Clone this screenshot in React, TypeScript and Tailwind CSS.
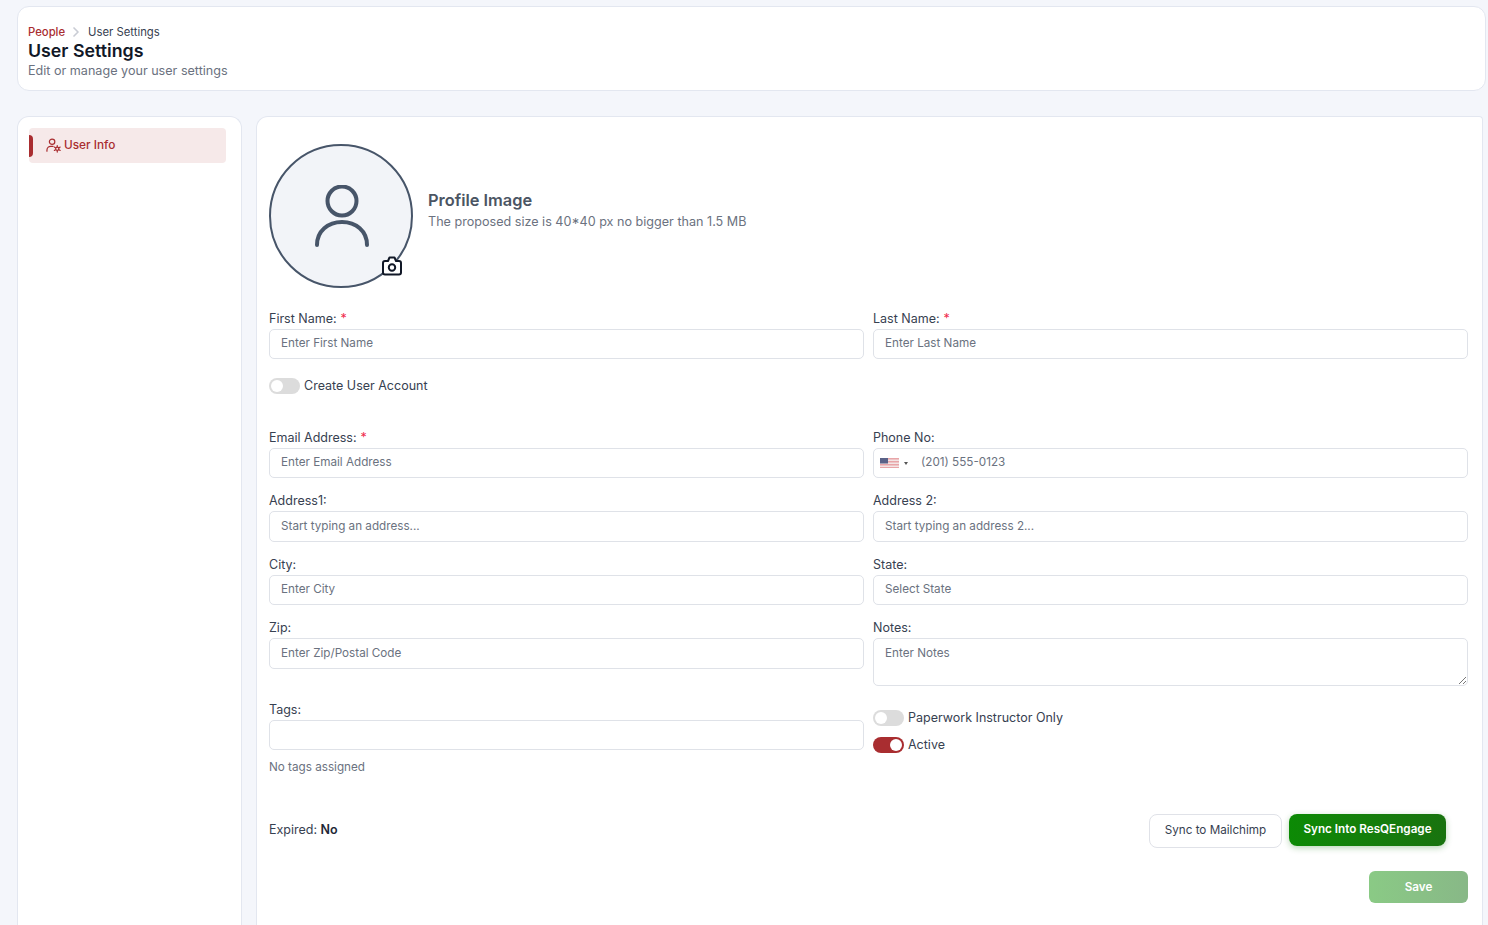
import { ChevronRight } from "lucide-react";

function Label({ text, required }: { text: string; required?: boolean }) {
  return (
    <label className="block h-[19px] text-[12.5px] leading-[19px] text-[#374151]">
      {text}
      {required && <span className="ml-1 text-[#ef2b4b]">*</span>}
    </label>
  );
}

function Field({ label, placeholder, required, tall }: { label: string; placeholder?: string; required?: boolean; tall?: "31" | "48" }) {
  const box = tall === "31" ? "h-[31px] leading-[28px]" : tall === "48" ? "h-[48px] leading-[28px]" : "h-[30px] leading-[26px]";
  return (
    <div>
      <Label text={label} required={required} />
      <div className={`${box} mt-[1px] rounded-[5px] border border-[#dfe2e8] bg-white px-[11px] text-[11.7px] text-[#6b7280]`}>
        {placeholder}
      </div>
    </div>
  );
}

function Toggle({ on, label }: { on?: boolean; label: string }) {
  return (
    <div className="flex items-center gap-1">
      <span className={`flex h-4 w-[31px] items-center rounded-full px-[2px] ${on ? "justify-end bg-[#a92d30]" : "bg-[#dcdcdc]"}`}>
        <span className="h-3 w-3 rounded-full bg-white" />
      </span>
      <span className="-mt-[2px] text-[12.5px] leading-[15px] text-[#374151]">{label}</span>
    </div>
  );
}

export default function App() {
  return (
    <div className="flex h-[925px] flex-col overflow-hidden bg-[#f4f6fb] pl-[17px] pr-[2px] pt-[6px] font-['Inter',sans-serif]">
      <header className="h-[85px] shrink-0 rounded-xl border border-[#e3e7f0] bg-white pl-[10px] pt-[17px]">
        <div className="flex h-4 items-center text-[11.3px] leading-4">
          <span className="font-medium text-[#a92d30]">People</span>
          <ChevronRight className="ml-[3px] mr-[4px] h-4 w-4 text-[#c9ccd4]" strokeWidth={2.5} />
          <span className="text-[#374151]">User Settings</span>
        </div>
        <h1 className="-mt-[1px] mb-[1px] text-[17.8px] font-semibold leading-[23px] text-[#111827]">User Settings</h1>
        <p className="text-[12.6px] leading-[16px] text-[#6b7280]">Edit or manage your user settings</p>
      </header>

      <div className="mt-[25px] flex min-h-0 flex-1 gap-[14px]">
        <aside className="w-[225px] shrink-0 rounded-t-xl border border-b-0 border-[#e3e7f0] bg-white px-[11px] pt-[11px]">
          <div className="flex h-[35px] w-[197px] items-center rounded-[4px] bg-[#f6e9e9]">
            <span className="h-[22px] w-1 rounded-r-sm bg-[#a92d30]" />
            <svg viewBox="0 0 16 16" className="ml-[13px] h-[15px] w-[15px]" fill="none" stroke="#a92d30" strokeWidth="1.3" strokeLinecap="round">
              <circle cx="6.5" cy="4" r="2.9" />
              <path d="M1 14 V13 A4 4 0 0 1 5 9 H7.5" />
              <circle cx="12" cy="11.5" r="1.7" />
              <path d="M12 8 V9.2 M12 13.8 V15 M8.9 9.7 L10 10.4 M14 12.6 L15.1 13.3 M8.9 13.3 L10 12.6 M14 10.4 L15.1 9.7" />
            </svg>
            <span className="ml-[3px] text-[11.8px] font-medium leading-[15px] text-[#a92d30]">User Info</span>
          </div>
        </aside>

        <main className="w-[1227px] rounded-tl-xl rounded-tr-sm border border-b-0 border-[#e3e7f0] bg-white pl-3 pr-[14px] pt-[27px]">
          <div className="flex items-center gap-[15px]">
            <div className="relative flex h-[144px] w-[144px] items-center justify-center rounded-full border-2 border-[#475569] bg-[#f2f4f8]">
              <svg viewBox="0 0 54 62" className="ml-[1px] h-[62px] w-[54px]" fill="none" stroke="#475569" strokeWidth="4" strokeLinecap="round">
                <circle cx="27" cy="16" r="14.5" />
                <path d="M2 60 C2 46 13 37 27 37 C41 37 52 46 52 60" />
              </svg>
              <svg viewBox="0 0 20 20" className="absolute bottom-[10px] right-[9px] h-5 w-5" fill="white" stroke="#111827" strokeWidth="2" strokeLinejoin="round">
                <path d="M3 5 H6 L7.5 1.5 H12.5 L14 5 H17 A2 2 0 0 1 19 7 V16.5 A2 2 0 0 1 17 18.5 H3 A2 2 0 0 1 1 16.5 V7 A2 2 0 0 1 3 5 Z" />
                <circle cx="10" cy="11.5" r="3.2" />
              </svg>
            </div>
            <div className="-mt-[13px]">
              <h2 className="-mt-[1px] mb-[1px] text-[16.4px] font-semibold leading-[24px] text-[#4b5563]">Profile Image</h2>
              <p className="text-[12.6px] leading-[18px] text-[#6b7280]">The proposed size is 40*40 px no bigger than 1.5 MB</p>
            </div>
          </div>

          <div className="mt-[21px] grid grid-cols-2 gap-x-[9px]">
            <Field label="First Name:" placeholder="Enter First Name" required />
            <Field label="Last Name:" placeholder="Enter Last Name" required />
          </div>

          <div className="mt-[19px]">
            <Toggle label="Create User Account" />
          </div>

          <div className="mt-[34px] grid grid-cols-2 gap-x-[9px] gap-y-[13px]">
            <Field label="Email Address:" placeholder="Enter Email Address" required />
            <div>
              <Label text="Phone No:" />
              <div className="mt-[1px] flex h-[30px] items-center rounded-[5px] border border-[#dfe2e8] bg-white pl-[6px] text-[11.7px] leading-[26px] text-[#6b7280]">
                <svg viewBox="0 0 19 10" className="h-[10px] w-[19px]">
                  <rect width="19" height="10" fill="#e8a5a8" />
                  <rect y="1.5" width="19" height="1.5" fill="#f3e4e4" />
                  <rect y="4.5" width="19" height="1.5" fill="#f3e4e4" />
                  <rect y="7.5" width="19" height="1.5" fill="#f3e4e4" />
                  <rect width="8" height="5.5" fill="#5a6288" />
                </svg>
                <span className="ml-[5px] h-0 w-0 border-x-[2px] border-t-[3px] border-x-transparent border-t-[#555]" />
                <span className="-mt-[2px] ml-[13px]">(201) 555-0123</span>
              </div>
            </div>
            <Field label="Address1:" placeholder="Start typing an address..." tall="31" />
            <Field label="Address 2:" placeholder="Start typing an address 2..." tall="31" />
            <Field label="City:" placeholder="Enter City" />
            <Field label="State:" placeholder="Select State" />
            <Field label="Zip:" placeholder="Enter Zip/Postal Code" tall="31" />
            <div className="relative">
              <Field label="Notes:" placeholder="Enter Notes" tall="48" />
              <svg viewBox="0 0 8 8" className="absolute bottom-[2px] right-[2px] h-2 w-2" stroke="#555" strokeWidth="0.8">
                <path d="M1 8 L8 1 M5 8 L8 5" />
              </svg>
            </div>
          </div>

          <div className="mt-[14px] grid grid-cols-2 gap-x-[9px]">
            <div>
              <Label text="Tags:" />
              <div className="mt-[1px] h-[30px] rounded-[5px] border border-[#dfe2e8] bg-white" />
              <p className="mt-[9px] text-[11.7px] leading-4 text-[#6b7280]">No tags assigned</p>
            </div>
            <div className="mt-[10px] flex flex-col gap-[11px]">
              <Toggle label="Paperwork Instructor Only" />
              <Toggle on label="Active" />
            </div>
          </div>

          <div className="mt-[39px] flex items-center justify-between pr-[22px]">
            <p className="-mt-[1px] text-[12.5px] text-[#374151]">
              Expired: <span className="font-semibold text-[#1f2937]">No</span>
            </p>
            <div className="flex gap-[7px]">
              <button className="h-[34px] w-[133px] rounded-lg border border-[#e0e2e8] bg-white pb-[1px] text-[11.7px] text-[#374151]">Sync to Mailchimp</button>
              <button className="mb-[2px] h-8 w-[157px] rounded-lg bg-gradient-to-r from-[#0c8a05] to-[#19730f] pb-[1px] text-[11.7px] font-semibold text-white shadow-[0_2px_6px_rgba(22,120,15,0.3)]">Sync Into ResQEngage</button>
            </div>
          </div>

          <div className="mt-[23px] flex justify-end">
            <button className="h-8 w-[99px] rounded-md bg-gradient-to-r from-[#8aca85] to-[#88b887] pt-[1px] text-[11.7px] font-semibold text-white">Save</button>
          </div>
        </main>
      </div>
    </div>
  );
}
